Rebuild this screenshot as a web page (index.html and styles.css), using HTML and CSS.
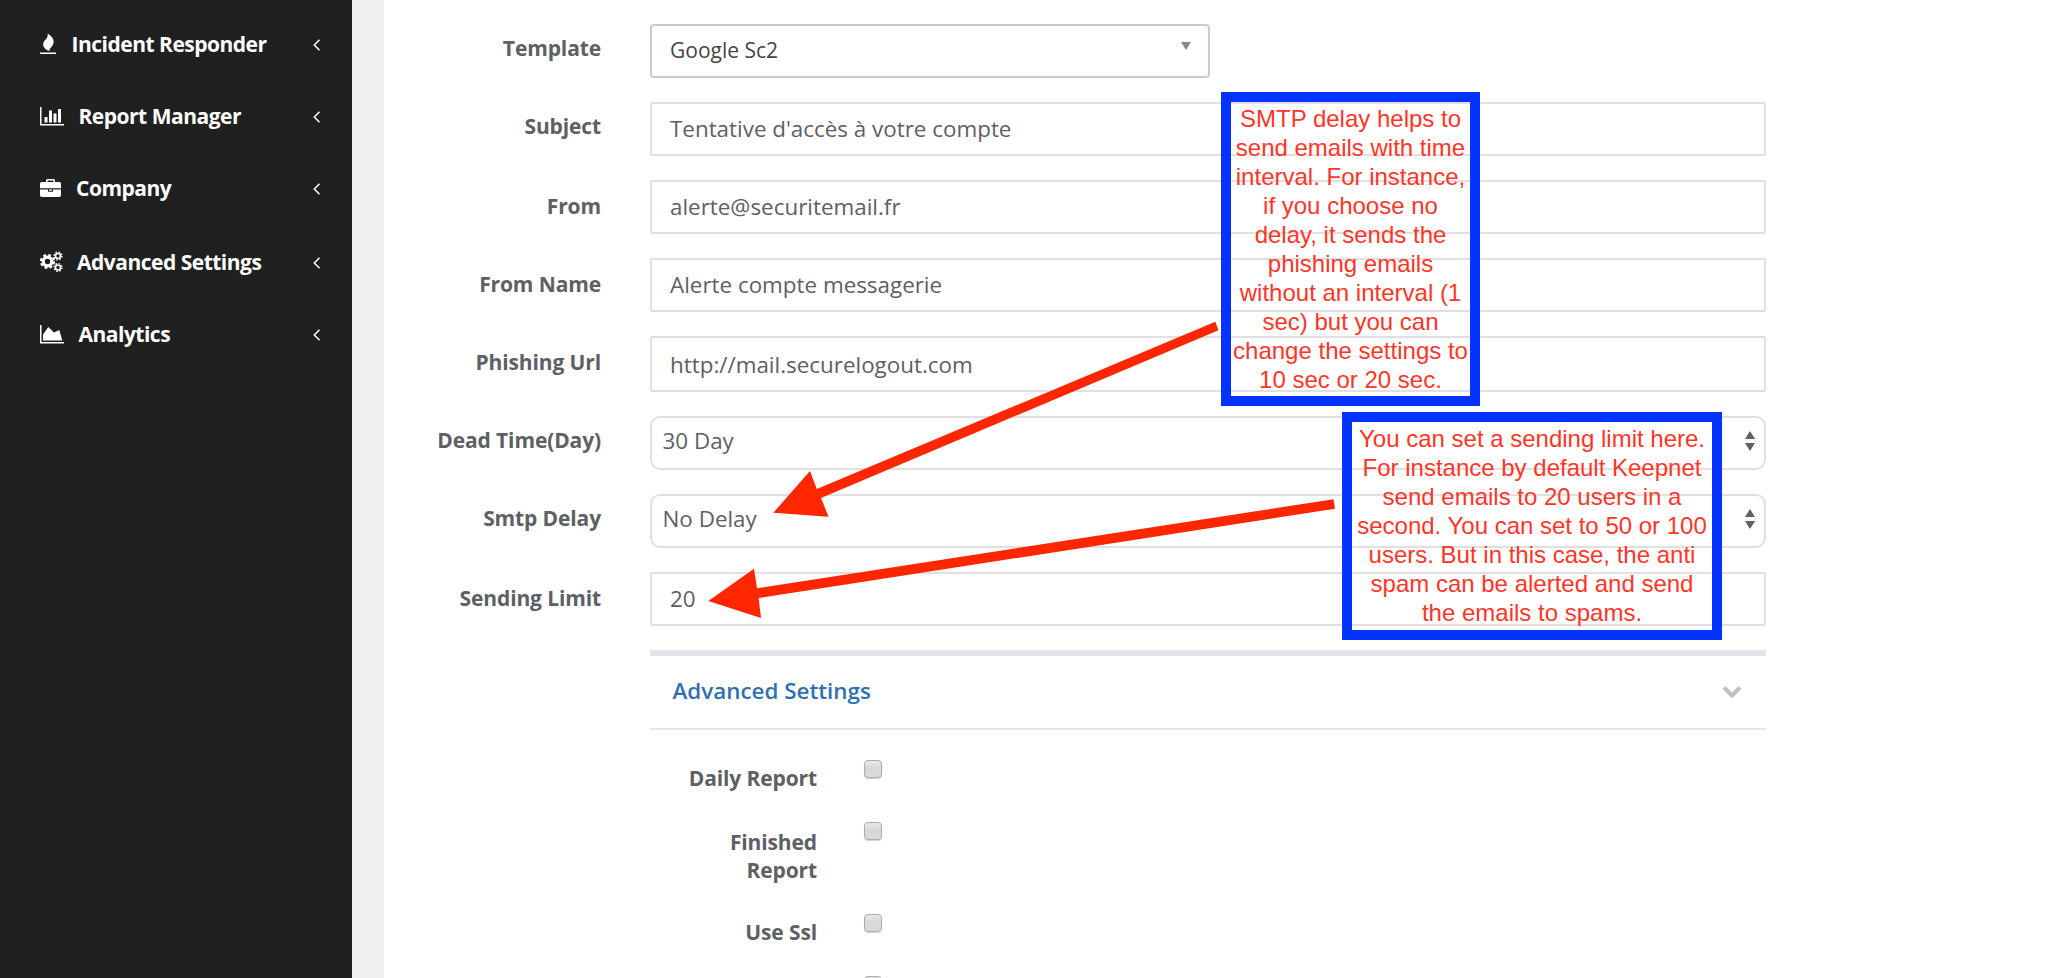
FILE: index.html
```html
<!DOCTYPE html>
<html lang="fr">
<head>
<meta charset="utf-8">
<title>Campaign settings</title>
<link rel="stylesheet" href="styles.css">
</head>
<body>
<div class="app">
  <nav class="sidebar">
    <a class="nav-item nav-fire">
      <svg class="nav-icon" width="16" height="22" viewBox="0 0 16 22"><path d="M7.600 0.500C12 3 14 6 13.600 9.500C13.200 13.500 9.500 14.500 9.300 18C6 17 3 14.500 3.200 11C3.400 7 8.800 5.500 7.600 0.500Z"/><path d="M0 19.500h16v1.500H0z"/></svg>
      <span class="nav-text">Incident Responder</span>
      <svg class="nav-arrow" width="8" height="12" viewBox="0 0 8 12"><path d="M6.500 0.800L1.300 6l5.200 5.200"/></svg>
    </a>
    <a class="nav-item nav-bars">
      <svg class="nav-icon" width="24" height="19" viewBox="0 0 24 19"><path d="M0 0h1.500v17H24v1.500H0zM4.500 10h3v5.500h-3zM9 3.500h3v12H9zM13.500 6.500h3v9h-3zM18 2h3v13.500h-3z"/></svg>
      <span class="nav-text">Report Manager</span>
      <svg class="nav-arrow" width="8" height="12" viewBox="0 0 8 12"><path d="M6.500 0.800L1.300 6l5.200 5.200"/></svg>
    </a>
    <a class="nav-item nav-case">
      <svg class="nav-icon" width="21" height="18" viewBox="0 0 21 18"><path fill-rule="evenodd" d="M6 3V1.500Q6 0 7.500 0h6Q15 0 15 1.500V3h4.200Q21 3 21 4.800V9.200H0V4.800Q0 3 1.800 3zM7.500 3h6V1.500h-6z"/><path d="M0 10.400h8v2.400h5v-2.400h8v5.800Q21 18 19.200 18H1.800Q0 18 0 16.200z"/><path d="M9 10.400h3v1.300H9z"/></svg>
      <span class="nav-text">Company</span>
      <svg class="nav-arrow" width="8" height="12" viewBox="0 0 8 12"><path d="M6.500 0.800L1.300 6l5.200 5.200"/></svg>
    </a>
    <a class="nav-item nav-gears">
      <svg class="nav-icon" width="23" height="22" viewBox="0 0 23 22"><g class="gear"><circle cx="7.500" cy="10.500" r="4.300" stroke-width="3.200"/><circle cx="7.500" cy="10.500" r="6.500" stroke-width="2.200" stroke-dasharray="2.800 2.305"/><circle cx="18" cy="5" r="2.500" stroke-width="1.600"/><circle cx="18" cy="5" r="3.900" stroke-width="1.400" stroke-dasharray="1.600 1.463"/><circle cx="18" cy="16.500" r="2.500" stroke-width="1.600"/><circle cx="18" cy="16.500" r="3.900" stroke-width="1.400" stroke-dasharray="1.600 1.463"/></g></svg>
      <span class="nav-text">Advanced Settings</span>
      <svg class="nav-arrow" width="8" height="12" viewBox="0 0 8 12"><path d="M6.500 0.800L1.300 6l5.200 5.200"/></svg>
    </a>
    <a class="nav-item nav-area">
      <svg class="nav-icon" width="24" height="19" viewBox="0 0 24 19"><path d="M0 0h1.500v17H24v1.500H0zM3 15.500V9.500L8.300 2 14 7.600 19.300 5 22.300 15.500z"/></svg>
      <span class="nav-text">Analytics</span>
      <svg class="nav-arrow" width="8" height="12" viewBox="0 0 8 12"><path d="M6.500 0.800L1.300 6l5.200 5.200"/></svg>
    </a>
  </nav>
  <main class="content">
    <div class="row"><label class="label">Template</label><div class="field template"><span>Google Sc2</span><svg class="caret" width="10" height="8" viewBox="0 0 10 8"><path d="M0 0h10L5 8z"/></svg></div></div>
    <div class="row"><label class="label">Subject</label><div class="field">Tentative d'accès à votre compte</div></div>
    <div class="row"><label class="label lower">From</label><div class="field">alerte@securitemail.fr</div></div>
    <div class="row"><label class="label lower">From Name</label><div class="field">Alerte compte messagerie</div></div>
    <div class="row"><label class="label lower">Phishing Url</label><div class="field tall">http://mail.securelogout.com</div></div>
    <div class="row"><label class="label">Dead Time(Day)</label><div class="field select"><span>30 Day</span><svg class="spin" width="10" height="20" viewBox="0 0 10 20"><path d="M0 8h10L5 0zM0 12h10l-5 8z"/></svg></div></div>
    <div class="row"><label class="label">Smtp Delay</label><div class="field select"><span>No Delay</span><svg class="spin" width="10" height="20" viewBox="0 0 10 20"><path d="M0 8h10L5 0zM0 12h10l-5 8z"/></svg></div></div>
    <div class="row"><label class="label lower">Sending Limit</label><div class="field">20</div></div>
    <section class="panel">
      <header class="panel-head"><h2 class="panel-title">Advanced Settings</h2><svg class="panel-arrow" width="20" height="14" viewBox="0 0 20 14"><path d="M2 2.500l8 8 8-8"/></svg></header>
      <div class="check-row daily"><label class="check-label">Daily Report</label><span class="checkbox"></span></div>
      <div class="check-row finished"><label class="check-label">Finished<br>Report</label><span class="checkbox"></span></div>
      <div class="check-row ssl"><label class="check-label">Use Ssl</label><span class="checkbox"></span></div>
      <div class="check-row"><label class="check-label"></label><span class="checkbox"></span></div>
    </section>
  </main>
  <svg class="arrows" width="2060" height="978" viewBox="0 0 2060 978"><path d="M773.300 512.800L810 471 816.800 489 1215.300 321.800 1218.500 330.200 821 498 828.500 516.700zM708.300 601L754 568.800 757 588.300 1333.500 499.200 1335 508.800 758.600 598 761 618z"/></svg>
  <aside class="note note-delay">SMTP delay helps to<br>send emails with time<br>interval. For instance,<br>if you choose no<br>delay, it sends the<br>phishing emails<br>without an interval (1<br>sec) but you can<br>change the settings to<br>10 sec or 20 sec.</aside>
  <aside class="note note-limit">You can set a sending limit here.<br>For instance by default Keepnet<br>send emails to 20 users in a<br>second. You can set to 50 or 100<br>users. But in this case, the anti<br>spam can be alerted and send<br>the emails to spams.</aside>
</div>
</body>
</html>
```
FILE: styles.css
```css
* { box-sizing: border-box; }
html { overflow: hidden; }
body { margin: 0; background: #fff; font-family: "Open Sans", sans-serif; color: #5d6064; }
.app { position: relative; display: flex; width: 2060px; height: 978px; overflow: hidden; }

.sidebar { width: 352px; flex: none; padding-top: 8px; background: #202020; }
.nav-item { display: flex; align-items: center; height: 72px; padding: 0 31px 0 40px; color: #fff; font-size: 21px; font-weight: 700; line-height: 28px; letter-spacing: -.5px; white-space: nowrap; }
.nav-icon { flex: none; fill: #fff; }
.nav-arrow { margin: 2px 0 0 auto; fill: none; stroke: #fff; stroke-width: 1.5; }
.nav-fire .nav-text { margin-left: 15.500px; }
.nav-bars .nav-text { margin-left: 14.500px; }
.nav-case .nav-text { margin-left: 15px; }
.nav-case .nav-icon { margin-bottom: 1px; }
.nav-gears { margin-top: 2px; }
.nav-gears .nav-text { margin-left: 14px; }
.nav-area .nav-text { margin-left: 14.500px; }
.gear { fill: none; stroke: #fff; }

.content { flex: 1; display: flex; flex-direction: column; gap: 24px; padding-top: 24px; border-left: 32px solid #f0f0f0; }
.row { display: flex; }
.label { width: 217px; margin-right: 49px; padding-top: 10px; flex: none; text-align: right; font-size: 21px; line-height: 28px; font-weight: 700; letter-spacing: -.12px; }
.label.lower { padding-top: 12px; }
.field { display: flex; align-items: center; width: 1116px; height: 54px; padding: 0 18px 1px; border: 2px solid #e0e0e0; border-radius: 2px; font-size: 22.400px; line-height: 30px; }
.field.tall { height: 56px; padding-top: 1px; padding-bottom: 0; }
.field.template { width: 560px; justify-content: space-between; padding-bottom: 2px; border-color: #c2cdd8; border-radius: 4px; color: #444; font-size: 21px; }
.caret { margin: 0 -1px 8px 0; fill: #888; }
.field.select { justify-content: space-between; padding: 0 9px 4px 10.500px; border-radius: 10px; }
.spin { fill: #5d6064; }

.panel { width: 1116px; margin-left: 266px; border-top: 6px solid #e1e5e9; }
.panel-head { display: flex; align-items: center; justify-content: space-between; height: 74px; padding: 0 24px 0 22.500px; border-bottom: 2px solid #e1e5e9; }
.panel-title { margin: 0 0 3px; color: #2f70b1; font-size: 22.400px; font-weight: 600; line-height: 30px; }
.panel-arrow { fill: none; stroke: #bfbfbf; stroke-width: 4; }
.check-row { display: flex; align-items: flex-start; }
.check-label { width: 167px; margin-right: 47px; padding-top: 4px; text-align: right; font-size: 21px; font-weight: 700; line-height: 28px; letter-spacing: -.12px; }
.checkbox { width: 18px; height: 18px; border: 1.5px solid #aaa; border-radius: 4px; background: linear-gradient(#e8e8e8, #d7d7d7 45%, #dadada); box-shadow: 0 1px 1px rgba(0, 0, 0, .18); }
.daily { margin-top: 30px; height: 62px; }
.finished { height: 92px; }
.finished .check-label { padding-top: 6px; }
.ssl { height: 62px; }

.arrows { position: absolute; left: 0; top: 0; fill: #ff2600; }
.note { position: absolute; padding-top: 1.500px; border: 10px solid #0433ff; color: #ff3528; font: 24px/29px "Liberation Sans", Arial, sans-serif; text-align: center; white-space: nowrap; }
.note-delay { left: 1221px; top: 92px; width: 259px; height: 314px; }
.note-limit { left: 1342px; top: 412px; width: 380px; height: 228px; }
```
